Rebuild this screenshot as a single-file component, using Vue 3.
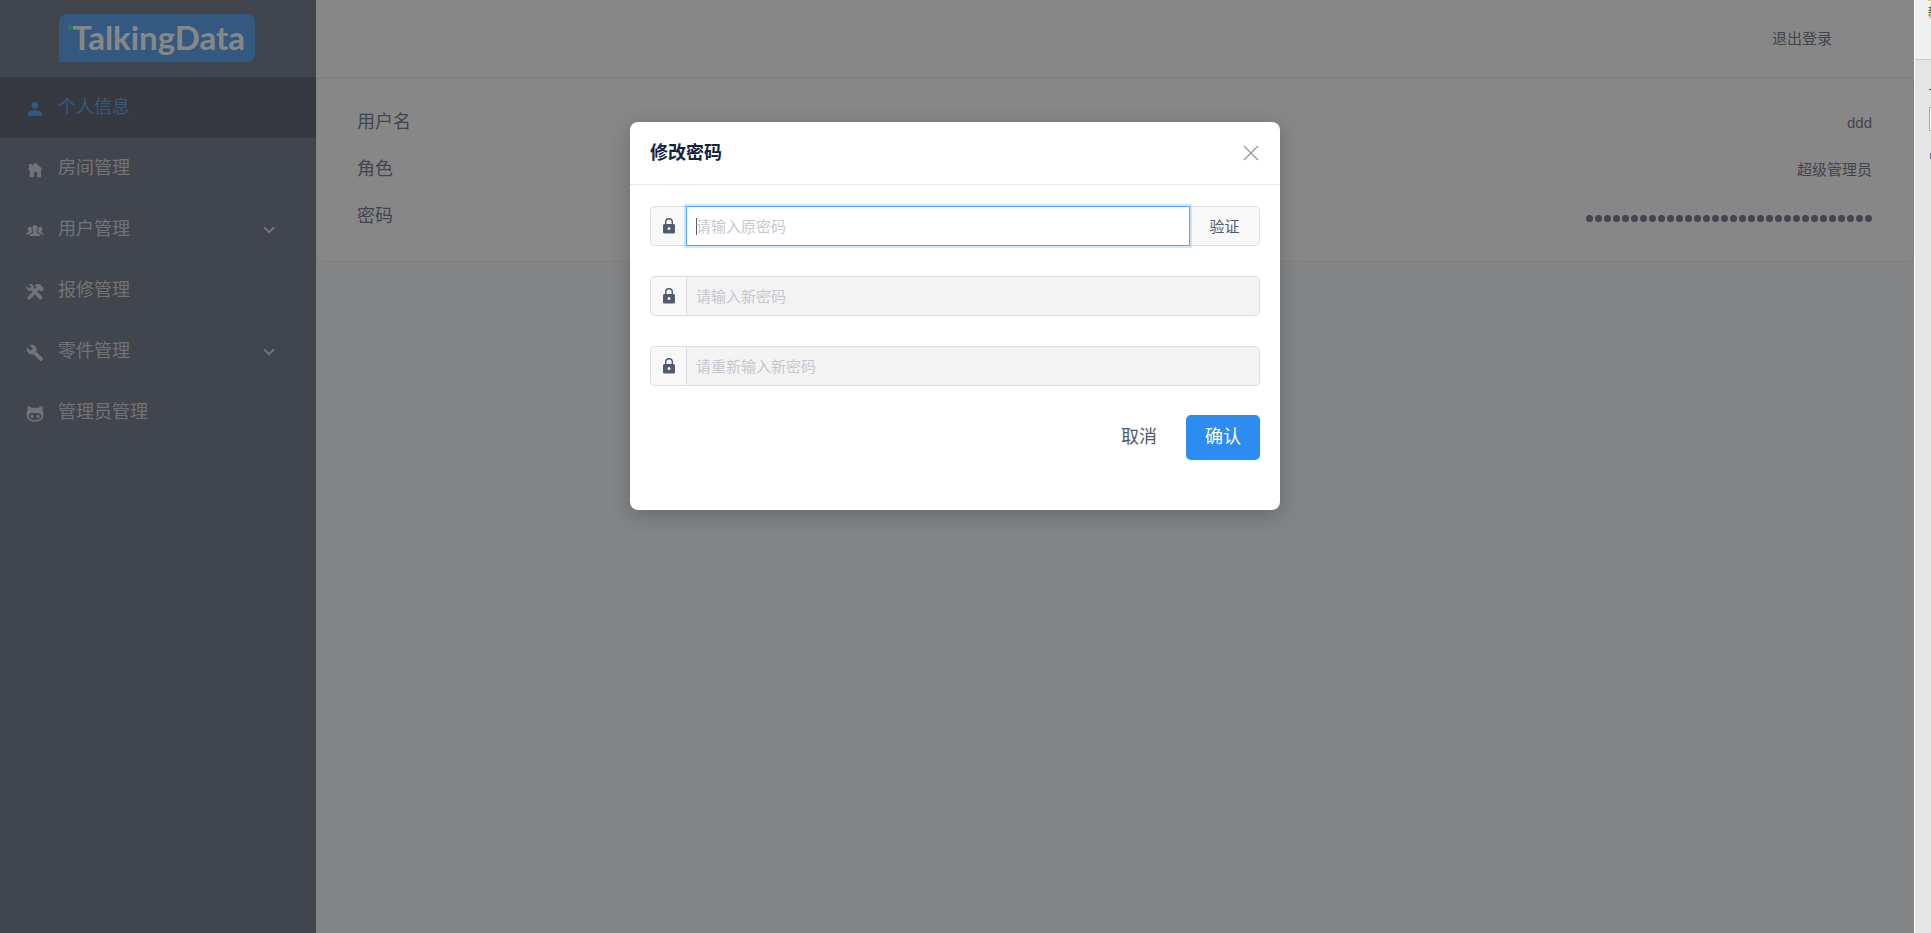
<template>
  <div class="screen">
    <div class="layout">
      <aside class="sider">
        <div class="logo-box">
          <div class="logo"><i class="logo-dot"></i>TalkingData</div>
        </div>
        <nav class="menu">
          <a
            v-for="m in menus"
            :key="m.name"
            href="#"
            class="menu-item"
            :class="{ active: m.name === activeMenu }"
            @click.prevent="activeMenu = m.name"
          >
            <svg class="menu-icon" viewBox="0 0 24 24" aria-hidden="true">
              <path :d="m.icon" fill-rule="evenodd" />
            </svg>
            <span class="menu-text">{{ m.title }}</span>
            <svg v-if="m.children" class="arrow" viewBox="0 0 12 8" aria-hidden="true">
              <path d="M1 1.2l5 5 5-5" />
            </svg>
          </a>
        </nav>
      </aside>

      <main class="main">
        <header class="header">
          <button type="button" class="logout">退出登录</button>
        </header>
        <section class="card">
          <div v-for="row in userInfo" :key="row.label" class="row">
            <span class="label">{{ row.label }}</span>
            <span v-if="row.dots" class="dots">
              <i v-for="n in row.dots" :key="n"></i>
            </span>
            <span v-else class="value">{{ row.value }}</span>
          </div>
        </section>
      </main>

      <!-- 修改密码弹窗 -->
      <div v-if="showModal" class="mask">
        <div class="modal" role="dialog" aria-labelledby="modal-title">
          <div class="modal-header">
            <h2 id="modal-title">修改密码</h2>
            <button type="button" class="close" aria-label="关闭" @click="close">
              <svg viewBox="0 0 16 16"><path d="M1 1l14 14M15 1L1 15" /></svg>
            </button>
          </div>
          <form class="modal-body" @submit.prevent="submit">
            <div class="fields">
              <div v-for="f in fields" :key="f.key" class="input-group">
                <label class="prepend" :for="f.key" :aria-label="f.placeholder">
                  <svg class="lock" viewBox="0 0 12 16">
                    <path
                      fill-rule="evenodd"
                      d="M10.5 6H10V4a4 4 0 0 0-8 0v2h-.5A1.5 1.5 0 0 0 0 7.5V14a1.5 1.5 0 0 0 1.5 1.5h9A1.5 1.5 0 0 0 12 14V7.5A1.5 1.5 0 0 0 10.5 6zM6 12a1.5 1.5 0 1 1 0-3 1.5 1.5 0 0 1 0 3zM8.600 6H3.400V4a2.600 2.600 0 0 1 5.200 0z"
                    />
                  </svg>
                </label>
                <input
                  :id="f.key"
                  v-model="form[f.key]"
                  type="password"
                  :placeholder="f.placeholder"
                  :disabled="f.key !== 'oldPwd' && !verified"
                />
                <button v-if="f.key === 'oldPwd'" type="button" class="append" @click="verify">
                  验证
                </button>
              </div>
            </div>
            <div class="actions">
              <button type="button" class="btn" @click="close">取消</button>
              <button type="submit" class="btn primary">确认</button>
            </div>
          </form>
        </div>
      </div>
    </div>

    <!-- 右侧面板，只露出左边缘 -->
    <aside class="panel">
      <div class="panel-top"><i class="panel-icon"></i><span>新</span></div>
      <div class="panel-content">
        <i class="panel-dash"></i>
        <i class="panel-box"></i>
        <i class="panel-link"></i>
      </div>
    </aside>
  </div>
</template>

<script setup>
import { ref, reactive, onMounted } from 'vue'

/* --------------- 菜单 --------------- */
const activeMenu = ref('profile')
const menus = [
  {
    name: 'profile',
    title: '个人信息',
    icon: 'M12 11.500a4.500 4.500 0 1 0 0-9 4.500 4.500 0 0 0 0 9zM12 13.500c-3.500 0-9.500 1.500-9.500 5V21h19v-2.500c0-3.500-6-5-9.500-5z',
  },
  {
    name: 'room',
    title: '房间管理',
    icon: 'M12.500 2L22 10.500 20.800 12l-.8-.7V21.500h-5V15h-4.500v6.500H5V11.500l-1.200 1L2.500 11 4 9.600V4h3.800v2.200z',
  },
  {
    name: 'user',
    title: '用户管理',
    children: true,
    icon: 'M12 4c2.300 0 3.500 1.600 3.500 3.900 0 2-.8 3.200-1.300 4.200v1.500c0 1.600 4.800 1.500 5.200 5H4.600c.4-3.500 5.200-3.400 5.200-5v-1.500c-.5-1-1.300-2.200-1.300-4.200C8.500 5.600 9.700 4 12 4zM5 6.200c1 0 1.800.3 2.300 1 0 2.300.5 3.700 1.400 5.300-.3 1.700-3.700 1.600-5 4H.3c.3-2.900 3.500-2 3.500-3.800-.8-.9-1.300-1.800-1.300-3.500C2.500 7.400 3.300 6.200 5 6.200zM19 6.200c-1 0-1.800.3-2.300 1 0 2.300-.5 3.700-1.400 5.300.3 1.700 3.700 1.600 5 4h3.400c-.3-2.900-3.500-2-3.500-3.800.8-.9 1.300-1.800 1.300-3.500 0-1.800-.8-3-2.500-3z',
  },
  {
    name: 'repair',
    title: '报修管理',
    icon: 'M.6 4L4.500 7.300 7 5 3.800 1.500C8 .3 11 3 10.600 6.500L12 8 14 5.800 11.500 3.200C14.500.6 18 1 20 3l1.800 2.400 1.700.6-.2 3-2 2-2.700-.5-1.200-1.300-2.300 2.200 7.400 7.800-3.700 3.700-7-7.800-7.300 7.600-3.400-3.200 8-8-1.200-1.300C3.500 11.300-.6 8.500.6 4z',
  },
  {
    name: 'parts',
    title: '零件管理',
    children: true,
    icon: 'M22.700 19l-9.100-9.100c.9-2.300.4-5-1.500-6.900-2-2-5-2.400-7.400-1.300L9 6 6 9 1.600 4.700C.4 7.100.9 10.100 2.900 12.100c1.900 1.900 4.600 2.400 6.900 1.500l9.100 9.100c.4.4 1 .4 1.400 0l2.300-2.300c.5-.4.5-1.100.1-1.400z',
  },
  {
    name: 'admin',
    title: '管理员管理',
    icon: 'M2.300 1.500c2.200.1 4 1 5.500 2.500 2.500-.4 5.900-.4 8.400 0 1.500-1.500 3.300-2.400 5.500-2.500.7 1.700.7 3.600.2 5.400 1 1.300 1.300 3 1.300 5.300 0 6.500-3.400 9.800-11.200 9.800S.8 18.700.8 12.200c0-2.300.3-4 1.300-5.300-.5-1.800-.5-3.700.2-5.400zM7.500 10.600C5 10.600 3.700 12.500 3.700 15c0 3.700 3.300 4.900 8.300 4.900s8.300-1.200 8.300-4.900c0-2.500-1.300-4.400-3.800-4.400-1.500 0-3 .3-4.500.3s-3-.3-4.500-.3zM8 12.500c1.200 0 1.900 1.200 1.900 2.600S9.200 17.700 8 17.700s-1.900-1.200-1.900-2.600.7-2.600 1.900-2.600zM16 12.500c1.200 0 1.900 1.200 1.900 2.600s-.7 2.600-1.900 2.600-1.900-1.200-1.900-2.600.7-2.600 1.900-2.600z',
  },
]

/* --------------- 个人信息 --------------- */
const userInfo = [
  { label: '用户名', value: 'ddd' },
  { label: '角色', value: '超级管理员' },
  { label: '密码', dots: 32 },
]

/* --------------- 修改密码 --------------- */
const showModal = ref(true)
const verified = ref(false)
const form = reactive({ oldPwd: '', newPwd: '', rePwd: '' })
const fields = [
  { key: 'oldPwd', placeholder: '请输入原密码' },
  { key: 'newPwd', placeholder: '请输入新密码' },
  { key: 'rePwd', placeholder: '请重新输入新密码' },
]

const verify = () => {
  verified.value = form.oldPwd !== ''
}
const close = () => {
  showModal.value = false
}
const submit = () => {
  if (verified.value && form.newPwd && form.newPwd === form.rePwd) close()
}

onMounted(() => {
  document.getElementById('oldPwd')?.focus()
})
</script>

<style>
body {
  margin: 0;
}
</style>

<style scoped>
.screen {
  display: flex;
  min-height: 100vh;
  color: #515a6e;
  font-family: 'Liberation Sans', 'Noto Sans CJK SC', sans-serif;
  font-size: 15px;
  line-height: 25px;
}
.screen * {
  box-sizing: border-box;
}
button {
  padding: 0;
  border: 0;
  background: none;
  color: inherit;
  font: inherit;
  cursor: pointer;
}
.layout {
  position: relative;
  display: flex;
  flex: 1;
  background: #f5f7f9;
}

/* 侧边栏 */
.sider {
  flex: 0 0 316px;
  background: #515a6e;
}
.logo-box {
  height: 77px;
  padding: 14px 0 0 59px;
}
.logo {
  position: relative;
  width: 196px;
  height: 48px;
  padding-left: 13px;
  border-radius: 8px 8px 8px 0;
  background: #2d8cf0;
  color: #fff;
  font-family: Lato, sans-serif;
  font-size: 33px;
  font-weight: 700;
  line-height: 46px;
}
.logo-dot {
  position: absolute;
  left: 9px;
  top: 11px;
  width: 5px;
  height: 5px;
  background: #19d98a;
}
.menu-item {
  display: flex;
  align-items: center;
  height: 61px;
  padding: 0 41px 0 25px;
  color: rgba(255, 255, 255, 0.7);
  font-size: 18px;
  text-decoration: none;
}
.menu-item.active {
  background: #363e4f;
  color: #2d8cf0;
}
.menu-icon {
  width: 18px;
  height: 18px;
  margin: 3px 14px 0 1px;
  fill: currentColor;
}
.menu-text {
  flex: 1;
}
.arrow {
  width: 12px;
  height: 8px;
  fill: none;
  stroke: currentColor;
  stroke-width: 2;
}

/* 内容区 */
.main {
  flex: 1;
}
.header {
  display: flex;
  align-items: center;
  justify-content: flex-end;
  height: 77px;
  padding-right: 82px;
  background: #fff;
}
.card {
  padding: 21px 41px 21px 40px;
  border: 1px solid #e8eaec;
  border-radius: 5px;
  background: #fff;
}
.row {
  display: flex;
  align-items: center;
  justify-content: space-between;
  height: 47px;
}
.label {
  font-size: 18px;
}
.dots {
  display: flex;
  gap: 2px;
  padding-top: 3px;
}
.dots i {
  width: 7px;
  height: 7px;
  border-radius: 50%;
  background: #515a6e;
}

/* 弹窗 */
.mask {
  position: absolute;
  inset: 0;
  display: flex;
  align-items: flex-start;
  justify-content: center;
  padding: 122px 4px 0 0;
  background: rgba(55, 55, 55, 0.6);
}
.modal {
  width: 650px;
  border-radius: 8px;
  background: #fff;
  box-shadow: 0 5px 20px rgba(0, 0, 0, 0.2);
}
.modal-header {
  display: flex;
  align-items: center;
  justify-content: space-between;
  height: 63px;
  padding: 0 21px 0 20px;
  border-bottom: 1px solid #e8eaec;
}
.modal-header h2 {
  margin: 0;
  color: #17233d;
  font-size: 18px;
  font-weight: 700;
}
.close svg {
  display: block;
  width: 16px;
  height: 16px;
  fill: none;
  stroke: #999;
  stroke-width: 1.4;
}
.modal-body {
  padding: 21px 20px 50px;
}
.fields {
  display: grid;
  gap: 30px;
}
.input-group {
  display: flex;
  height: 40px;
}
.prepend,
.append {
  display: flex;
  align-items: center;
  justify-content: center;
  border: 1px solid #dcdee2;
  background: #f8f8f9;
}
.prepend {
  width: 36px;
  border-right: 0;
  border-radius: 5px 0 0 5px;
}
.append {
  width: 70px;
  border-left: 0;
  border-radius: 0 5px 5px 0;
}
.lock {
  width: 12px;
  height: 16px;
  fill: #515a6e;
}
.input-group input {
  flex: 1;
  min-width: 0;
  padding: 0 9px;
  border: 1px solid #dcdee2;
  border-radius: 0 5px 5px 0;
  outline: none;
  background: #fff;
  color: #515a6e;
  font: inherit;
}
.input-group input:not(:last-child) {
  border-radius: 0;
}
.input-group input::placeholder {
  color: #c5c8ce;
}
.input-group input:disabled {
  background: #f3f3f3;
}
.input-group input:focus {
  z-index: 1;
  border-color: #57a3f3;
  box-shadow: 0 0 0 2px rgba(45, 140, 240, 0.2);
}
/* 输入为空时光标常亮 */
.input-group input:focus:placeholder-shown {
  background: linear-gradient(#515a6e, #515a6e) 9px center / 1px 17px no-repeat #fff;
  caret-color: transparent;
}
.actions {
  display: flex;
  justify-content: flex-end;
  gap: 10px;
  margin-top: 29px;
}
.btn {
  width: 74px;
  height: 45px;
  border-radius: 5px;
  font-size: 18px;
}
.primary {
  background: #2d8cf0;
  color: #fff;
}

/* 右侧面板 */
.panel {
  flex: 0 0 17px;
  overflow: hidden;
  border-left: 1px solid #fff;
  background: #e5e5e5;
}
.panel-top {
  height: 60px;
  padding-left: 13px;
  border-bottom: 1px solid #ccc;
  background: #f0f0f0;
  color: #333;
  font-size: 12px;
  line-height: 18px;
}
.panel-icon {
  display: block;
  height: 1px;
  margin-bottom: 3px;
  background: #f0c060;
}
.panel-top span {
  display: block;
  width: 12px;
}
.panel-content {
  display: flex;
  flex-direction: column;
  padding: 29px 0 0 14px;
}
.panel-dash {
  height: 1px;
  background: #1e3a78;
}
.panel-box {
  height: 24px;
  margin-top: 17px;
  border: 1px solid #aaa;
  border-right: 0;
  background: #fff;
}
.panel-link {
  height: 6px;
  margin: 22px 0 0 1px;
  background: #4a7ac0;
}
</style>
